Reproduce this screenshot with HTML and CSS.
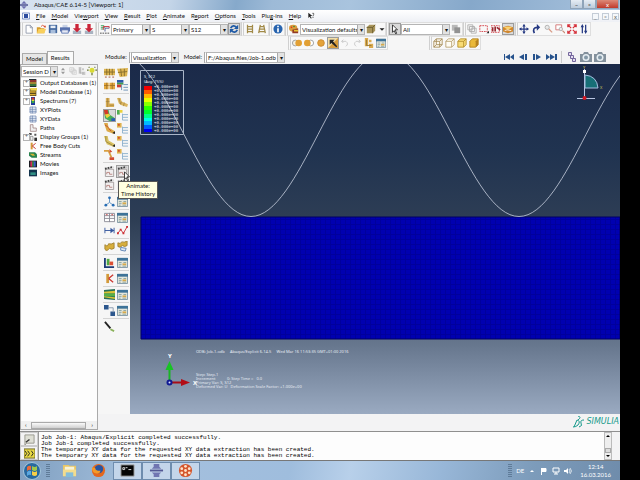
FILE: index.html
```html
<!DOCTYPE html>
<html lang="en">
<head>
<meta charset="utf-8">
<title>Abaqus/CAE 6.14-5 [Viewport: 1]</title>
<link rel="stylesheet" href="styles.css">
</head>
<body>
<svg class="defs" aria-hidden="true">
  <defs>
    <symbol id="app" viewBox="0 0 12 12"><path d="M6 0l4 4H2zM6 12l4-4H2z" fill="#6c70b0"/><path d="M0 5h12v2H0z" fill="#3d4388"/></symbol>
    <symbol id="doc" viewBox="0 0 12 12"><path d="M.5 1.500h11v9H.5z" fill="#fff" stroke="#3d5fae"/><path d="M3 3h6v6H3z" fill="#2d4c9f"/></symbol>
    <symbol id="new" viewBox="0 0 12 12"><path d="M2.500 1.500h5l2.500 2.500v7h-7.500z" fill="#fff" stroke="#8b94a6"/><path d="M7.500 1.500v3h3" fill="none" stroke="#8b94a6"/></symbol>
    <symbol id="open" viewBox="0 0 12 12"><path d="M1 4h4l1 1h4v6H1z" fill="#d59b2c"/><path d="M3 6h9l-2 5H1z" fill="#f8cf5c"/><path d="M6 3q2-3 4 0" fill="none" stroke="#d64426"/><path d="M9 2h3l-1 3z" fill="#d64426"/></symbol>
    <symbol id="save" viewBox="0 0 12 12"><path d="M1 1h10v10H1z" fill="#44699f"/><path d="M3 2h6v3H3z" fill="#e7eef7"/><path d="M3 7h6v4H3z" fill="#a9bedb"/></symbol>
    <symbol id="print" viewBox="0 0 12 12"><path d="M3 1h6v4H3z" fill="#c8d2e6"/><path d="M0 4h12v5H0z" fill="#5670ad"/><path d="M2 7h8v4H2z" fill="#e5e9f4" stroke="#5670ad"/></symbol>
    <symbol id="down" viewBox="0 0 12 12"><path d="M1 8h10v4H1z" fill="#a9b3c1"/><path d="M4 0h4v5h3L6 10 1 5h3z" fill="#cb2438"/></symbol>
    <symbol id="field" viewBox="0 0 12 12"><path d="M1 2h4M1 4h5M1 6h3" stroke="#289c51"/><path d="M4 7V3h7v2" fill="none" stroke="#c92432"/><path d="M6 9V5h5" fill="none" stroke="#394983"/><path d="M0 11h12" stroke="#333" stroke-dasharray="2 1"/></symbol>
    <symbol id="sync" viewBox="0 0 12 12"><path d="M2 5q3-5 7-1M10 7q-3 5-7 1" fill="none" stroke="#1f5aa6" stroke-width="2"/><path d="M11 1v5H6zM1 11V6h5z" fill="#1f5aa6"/></symbol>
    <symbol id="ladder" viewBox="0 0 12 12"><path d="M3 1v10M9 1v10M3 3h6M3 6h6M3 9h6" stroke="#a18a48" fill="none" stroke-width="1.500"/></symbol>
    <symbol id="ladder2" viewBox="0 0 12 12"><path d="M4 1L2 11M8 1l2 10M4 3h4M3 6h6M2 9h8" stroke="#a18a48" fill="none" stroke-width="1.500"/></symbol>
    <symbol id="info" viewBox="0 0 12 12"><circle cx="6" cy="6" r="5.500" fill="#2864af"/><path d="M6 2v2M6 5v5" stroke="#fff" stroke-width="2"/></symbol>
    <symbol id="palette" viewBox="0 0 12 12"><ellipse cx="5" cy="5" rx="5" ry="4" fill="#d99b3c"/><circle cx="3" cy="4" r="1" fill="#d32"/><circle cx="6" cy="3" r="1" fill="#383"/><path d="M4 11V7l7-2v6z" fill="#943b25"/><path d="M6 7h5v2H6z" fill="#e7c435"/></symbol>
    <symbol id="cube" viewBox="0 0 12 12"><path d="M1 4l3-3h7v7l-3 3H1z" fill="#a9955b"/><path d="M1 4h7v7M8 4l3-3" fill="none" stroke="#655728"/></symbol>
    <symbol id="caret" viewBox="0 0 12 12"><path d="M3 5h6L6 8z" fill="#222"/></symbol>
    <symbol id="arrow" viewBox="0 0 12 12"><path d="M3 1v9l2-2 2 4 1-1-2-4h3z" fill="#fff" stroke="#222"/></symbol>
    <symbol id="gray" viewBox="0 0 12 12"><path d="M1 1h7v7H1z" fill="#b9b9b9"/><path d="M4 4h7v7H4z" fill="#929292"/></symbol>
    <symbol id="layers" viewBox="0 0 12 12"><path d="M1 1h6v6H1zM3 3h6v6H3zM5 5h6v6H5z" fill="#f7f7f7" stroke="#aaa"/></symbol>
    <symbol id="redrect" viewBox="0 0 12 12"><path d="M1 2h9v7H1z" fill="none" stroke="#d3343b" stroke-dasharray="2 1"/><path d="M9 11l3-3v3z" fill="#222"/></symbol>
    <symbol id="redpick" viewBox="0 0 12 12"><path d="M0 2h10v8H0z" fill="none" stroke="#d3343b" stroke-dasharray="2 1"/><path d="M2 4v5M5 3v6M7 4l4 3" stroke="#9a2931" stroke-width="2"/></symbol>
    <symbol id="disk" viewBox="0 0 12 12"><path d="M0 4l6-2 6 2v5l-6 2-6-2z" fill="#d0872d"/><path d="M1 4l5-1 5 1-5 3z" fill="#fbd26c"/><path d="M2 8l3-1 5 1" stroke="#fff" fill="none"/></symbol>
    <symbol id="pan" viewBox="0 0 12 12"><path d="M6 1v10M1 6h10" stroke="#263a83" stroke-width="1.500"/><path d="M6 0l2 3H4zM6 12l2-3H4zM0 6l3-2v4zM12 6L9 4v4z" fill="#263a83"/></symbol>
    <symbol id="rotate" viewBox="0 0 12 12"><path d="M4 11Q1 4 8 4" fill="none" stroke="#263a83" stroke-width="2"/><path d="M7 0l4 4-4 4z" fill="#263a83"/></symbol>
    <symbol id="mag" viewBox="0 0 12 12"><circle cx="5" cy="4" r="2.500" fill="#e9e9e9" stroke="#aaa"/><path d="M7 6l4 4" stroke="#d89b86" stroke-width="1.500"/></symbol>
    <symbol id="zoombox" viewBox="0 0 12 12"><path d="M1 1h7v6H1z" fill="#fff" stroke="#cf6b6b"/><circle cx="7" cy="6" r="2" fill="#eee" stroke="#aaa"/><path d="M9 8l3 3" stroke="#c98b76" stroke-width="1.500"/></symbol>
    <symbol id="fit" viewBox="0 0 12 12"><path d="M1 4V1h3M8 1h3v3M11 8v3H8M4 11H1V8M1 1l4 4M11 1L7 5M11 11L7 7M1 11l4-4" fill="none" stroke="#d52f39" stroke-width="1.500"/></symbol>
    <symbol id="updown" viewBox="0 0 12 12"><path d="M4 11V2M8 1v9" stroke="#263a83" stroke-width="1.500"/><path d="M4 0l2 4H2zM8 12l2-4H6z" fill="#263a83"/></symbol>
    <symbol id="both" viewBox="0 0 12 12"><circle cx="4" cy="6" r="3.500" fill="#f2eee0" stroke="#949494"/><circle cx="8" cy="6" r="4" fill="#e2a034"/></symbol>
    <symbol id="left" viewBox="0 0 12 12"><circle cx="8" cy="6" r="3.500" fill="#fff" stroke="#949494"/><circle cx="4" cy="6" r="4" fill="#e2a034"/></symbol>
    <symbol id="dot" viewBox="0 0 12 12"><circle cx="6" cy="6" r="4" fill="#e4a33b" stroke="#c8852c"/></symbol>
    <symbol id="swap" viewBox="0 0 12 12"><path d="M0 0h12v12H0z" fill="#d79c3d"/><path d="M0 0h12L0 12z" fill="#f3dfaa"/><path d="M2 2h6L6 4l5 6-1 1-6-5-2 2z" fill="#222"/></symbol>
    <symbol id="undo" viewBox="0 0 12 12"><path d="M4 2L2 4l2 2M2 4h5q4 3 0 6" fill="none" stroke="#c4c4c4"/></symbol>
    <symbol id="redo" viewBox="0 0 12 12"><path d="M8 2l2 2-2 2M10 4H5q-4 3 0 6" fill="none" stroke="#c4c4c4"/></symbol>
    <symbol id="groups" viewBox="0 0 12 12"><path d="M1 0h4v10H1zM6 7h5v5H6zM6 2h3v3H6z" fill="#daaa4d"/><path d="M3 2v7h6" stroke="#907335" fill="none"/></symbol>
    <symbol id="table" viewBox="0 0 12 12"><path d="M.5 1.500h11v10H.5z" fill="#e4e6dc" stroke="#7c95a3"/><path d="M0 1h12v3H0z" fill="#3e7398"/><path d="M2 6h3M2 8h3M7 6h3M2 10h2M6 10h4" stroke="#8aa3a0"/><path d="M6 7h4v2H6z" fill="#d7a94b"/></symbol>
    <symbol id="wire" viewBox="0 0 12 12"><path d="M1 4h7v7H1zM4 1h7v7H4zM1 4l3-3M8 4l3-3M1 11l3-3M8 11l3-3" fill="#fff9e8" fill-opacity=".5" stroke="#a38952"/></symbol>
    <symbol id="hidden" viewBox="0 0 12 12"><path d="M1 4l3-3h7v7l-3 3H1zM1 4h7v7M8 4l3-3" fill="#fffdf5" stroke="#b49b67"/></symbol>
    <symbol id="filled" viewBox="0 0 12 12"><path d="M1 4l3-3h7v7l-3 3H1zM1 4h7v7M8 4l3-3" fill="#f8dc75" stroke="#b28b28"/></symbol>
    <symbol id="shaded" viewBox="0 0 12 12"><path d="M1 4l3-3h7v7l-3 3H1z" fill="#eab93a" stroke="#af8120"/><path d="M8 4l3-3v7l-3 3z" fill="#b68220"/></symbol>
    <symbol id="first" viewBox="0 0 12 12"><path d="M1 3h1v6H1zM7 3v6L2 6zM11 3v6L7 6z" fill="#25518c"/><path d="M1.500 3v6" stroke="#25518c"/></symbol>
    <symbol id="prev" viewBox="0 0 12 12"><path d="M7 3v6L2 6zM8 3h2v6H8z" fill="#25518c"/></symbol>
    <symbol id="next" viewBox="0 0 12 12"><path d="M5 3v6l5-3zM2 3h2v6H2z" fill="#25518c"/></symbol>
    <symbol id="last" viewBox="0 0 12 12"><path d="M1 3v6l4-3zM5 3v6l5-3zM10 3h2v6h-2z" fill="#25518c"/></symbol>
    <symbol id="frames" viewBox="0 0 12 12"><path d="M2.500 1.500h3v3h-3zM4.500 4.500h3v3h-3zM6.500 7.500h3v3h-3z" fill="#e2dcf0" stroke="#74669c"/></symbol>
    <symbol id="camera" viewBox="0 0 12 12"><path d="M0 3h3l1-2h4l1 2h3v8H0z" fill="#83909c"/><circle cx="6" cy="6.500" r="3.500" fill="#e5edf2"/><circle cx="6" cy="6.500" r="2" fill="#8498a7"/></symbol>
    <symbol id="mesh" viewBox="0 0 12 12"><path d="M0 2h12v7H0z" fill="#e0b653"/><path d="M0 5.500h12M3 2v7M6 2v7M9 2v7" stroke="#876f2d"/><path d="M1 11h2M5 11h2M9 11h2" stroke="#a44d2b"/></symbol>
    <symbol id="mesh2" viewBox="0 0 12 12"><path d="M0 2l12-1-1 9-8 1z" fill="#dcb450"/><path d="M1 6l10-1M4 2l1 8M8 2v8" stroke="#876f2d"/></symbol>
    <symbol id="meshpair" viewBox="0 0 12 12"><path d="M0 3h5v7H0zM6 3h6v7H6z" fill="#e3a940"/><path d="M0 6h5M6 6h6M3 3v7M9 3v7" stroke="#a17329"/></symbol>
    <symbol id="rainbow" viewBox="0 0 12 12"><path d="M0 0h7v3H0z" fill="#2957aa"/><path d="M0 3h7v2H0z" fill="#3d9e4e"/><path d="M0 5h5v3H0z" fill="#cd3b2f"/><path d="M7 5h5M7 8h5M7 11h5M5 5v6" stroke="#6a91b4"/></symbol>
    <symbol id="ell" viewBox="0 0 12 12"><path d="M2 1h4v6h5v4H2z" fill="#d9ad54"/><path d="M2 5h4M4 1v10M6 9h5" stroke="#9a7b3a" stroke-width=".7"/></symbol>
    <symbol id="ell2" viewBox="0 0 12 12"><path d="M0 1h4l1 4 7 3-1 3-6-2-3-2z" fill="#dcb65f"/><path d="M2 1l2 7M5 5l-1 3M8 6l-1 4" stroke="#9a7b3a" stroke-width=".7"/></symbol>
    <symbol id="contour" viewBox="0 0 12 12"><path d="M0 0h5l1 5 6 4v3H6L1 9z" fill="#44ad58"/><path d="M0 0h4l1 4-4 2z" fill="#d63a29"/><path d="M1 5l4-1 2 2-4 3z" fill="#ead33b"/><path d="M8 9l4 0v3H8z" fill="#285bb5"/></symbol>
    <symbol id="opts" viewBox="0 0 12 12"><path d="M0 0h5v5H0z" fill="#dfb24f"/><path d="M1 1h2v2H1z" fill="#d0502c"/><path d="M6 4v7M6 5h6M6 8h6M6 11h6" stroke="#8bb0cd"/></symbol>
    <symbol id="optsc" viewBox="0 0 12 12"><path d="M0 0h3v5H0z" fill="#4fae51"/><path d="M3 0h3v3H3z" fill="#ead33b"/><path d="M6 4v7M6 5h6M6 8h6M6 11h6" stroke="#8bb0cd"/></symbol>
    <symbol id="symb" viewBox="0 0 12 12"><path d="M0 0h4l1 5 7 4-1 3-8-3z" fill="#dcaa48"/><path d="M1 2l4 3M5 6l3 3" stroke="#c64a29"/><path d="M9 11l3-2v3z" fill="#222"/></symbol>
    <symbol id="mat" viewBox="0 0 12 12"><path d="M0 0h4l1 5 7 4-1 3-8-3z" fill="#d9c061"/><path d="M2 0v6l7 4" stroke="#9c8a3d" fill="none"/><path d="M9 11l3-2v3z" fill="#222"/></symbol>
    <symbol id="orient" viewBox="0 0 12 12"><path d="M0 2h5l3 7" fill="none" stroke="#d89f42" stroke-width="2"/><path d="M6 0l3 3-3 1M6 9h5v3H6z" fill="#d14c34"/></symbol>
    <symbol id="clap" viewBox="0 0 12 12"><path d="M1.500 3.500h9v8h-9z" fill="#f1efef" stroke="#a39d9d"/><path d="M1 3l9-2" stroke="#444" stroke-width="2" stroke-dasharray="2 1"/><path d="M3 9V7h3v2h3" stroke="#b98480" fill="none"/></symbol>
    <symbol id="axes" viewBox="0 0 12 12"><path d="M6 1v6l-4 3M6 7l4 3" stroke="#5e90c0" fill="none"/><circle cx="6" cy="2" r="1.500" fill="#286db4"/><circle cx="2" cy="10" r="1.500" fill="#286db4"/><circle cx="10" cy="10" r="1.500" fill="#286db4"/></symbol>
    <symbol id="xydata" viewBox="0 0 12 12"><path d="M.5 1.500h11v9H.5zM0 4h12M0 7h12M6 1v10" stroke="#8b8b96" fill="#fff"/><path d="M2 3h2M8 3h2" stroke="#c43a3a"/></symbol>
    <symbol id="span" viewBox="0 0 12 12"><path d="M1 3v6M11 3v6M1 6h10" stroke="#33559d"/><path d="M7 3l4 3-4 3z" fill="#33559d"/></symbol>
    <symbol id="zig" viewBox="0 0 12 12"><path d="M1 9l3-4 3 4 4-7" stroke="#cc2f34" fill="none"/><path d="M0 8h2v2H0zM3 4h2v2H3zM6 8h2v2H6zM10 1h2v2h-2z" fill="#cc2f34"/></symbol>
    <symbol id="flag" viewBox="0 0 12 12"><path d="M1 4q3 3 4-1 3 1 6-1v6q-3 2-5 0-3 4-5 1z" fill="#d7ae3c" stroke="#a18130"/></symbol>
    <symbol id="flag2" viewBox="0 0 12 12"><path d="M1 2q3 2 4-1 3 1 6-1v5q-3 2-5 0-3 3-5 1z" fill="#d7ae3c" stroke="#a18130"/><path d="M4 7l6 1-1 3-5-1z" fill="#dfe8f3" stroke="#5f83b4"/></symbol>
    <symbol id="lbars" viewBox="0 0 12 12"><path d="M1 1v10h10" fill="none" stroke="#1d3c78" stroke-width="2"/><path d="M3 2h3v7H3z" fill="#50a842"/><path d="M6 5h4v4H6z" fill="#db5035"/></symbol>
    <symbol id="forces" viewBox="0 0 12 12"><path d="M4 1v10" stroke="#d29a3b" stroke-width="3"/><path d="M5 6l5-4M5 6l5 4" stroke="#cb3a33" stroke-width="1.500"/></symbol>
    <symbol id="stream" viewBox="0 0 12 12"><path d="M0 1l12-1v12L0 11z" fill="#286f57"/><path d="M0 3l12-1v3L0 5z" fill="#d9c338"/><path d="M0 5h12v3H0z" fill="#55b049"/><path d="M0 8l12 1v2L0 9z" fill="#d9c338"/></symbol>
    <symbol id="link" viewBox="0 0 12 12"><path d="M0 0h5v5H0zM7 7h5v5H7z" fill="#2b568d"/><path d="M5 3h5v5" stroke="#8a9aad" fill="none"/></symbol>
    <symbol id="dgroup" viewBox="0 0 12 12"><path d="M0 0h4v3H0zM8 1h3v3H8z" fill="#555"/><path d="M2 5h4v6H2z" fill="#eee" stroke="#777"/><path d="M8 7h4v5H8z" fill="#333"/></symbol>
    <symbol id="brush" viewBox="0 0 12 12"><path d="M1 1l6 7" stroke="#222" stroke-width="2"/><path d="M7 9l4 2" stroke="#8bb25b" stroke-width="2"/></symbol>
    <symbol id="db" viewBox="0 0 12 12"><path d="M0 0h11v12H0z" fill="#222c33"/><path d="M1 2h10v2H1z" fill="#c53c2d"/><path d="M1 5h10v2H1z" fill="#e2b433"/><path d="M1 8h10v2H1z" fill="#4a9a3c"/></symbol>
    <symbol id="mdb" viewBox="0 0 12 12"><path d="M0 1h11v11H0z" fill="#5b4a1c"/><path d="M2 0h10v4H2z" fill="#ecd04f"/><path d="M1 5h9v2H1zM1 9h9v2H1z" fill="#d9ad34"/></symbol>
    <symbol id="movie" viewBox="0 0 12 12"><path d="M0 1h12v10H0z" fill="#1b1b22"/><path d="M2 2h3v8H2z" fill="#d32f5a"/><path d="M5 2h2v8H5z" fill="#3bab3e"/><path d="M7 2h3v8H7z" fill="#3559c9"/></symbol>
    <symbol id="image" viewBox="0 0 12 12"><path d="M0 1h12v10H0z" fill="#13344d"/><path d="M2 5h8v4H2z" fill="#2f8f83"/></symbol>
    <symbol id="streams" viewBox="0 0 12 12"><path d="M0 2h9l3 3v5H4L0 7z" fill="#27824f"/><path d="M1 4h6l2 3H5z" fill="#d5b737"/></symbol>
    <symbol id="spec" viewBox="0 0 12 12"><path d="M3 0h6v12H3z" fill="#233e9b"/><path d="M4 1h4v3H4z" fill="#db3628"/><path d="M4 4h4v2H4z" fill="#e8d930"/><path d="M4 6h4v3H4z" fill="#37ab48"/></symbol>
    <symbol id="grid" viewBox="0 0 12 12"><path d="M1.500 1.500h9v9h-9zM1 5h10M1 8h10M5 1v10" fill="#e8eef8" stroke="#647da9"/></symbol>
    <symbol id="path" viewBox="0 0 12 12"><path d="M2 1h4v5h5v5H2z" fill="#eee" stroke="#927171"/></symbol>
    <symbol id="bulb" viewBox="0 0 12 12"><circle cx="6" cy="5" r="3" fill="#d9db34"/><path d="M6 8v3M0 5h2M10 5h2M2 1l1 1M10 1L9 2" stroke="#68762d" stroke-width="1.500"/></symbol>
    <symbol id="spin" viewBox="0 0 12 12"><path d="M3 5l3-4 3 4zM3 7l3 4 3-4z" fill="#9a9a9a"/></symbol>
    <symbol id="hint" viewBox="0 0 12 12"><path d="M2 1v8l2-2 2 3 1-1-2-3h3z" fill="#222"/><path d="M8 2h2v2L9 6M9 7v2" stroke="#222" fill="none"/></symbol>
    <symbol id="prompt" viewBox="0 0 12 12"><path d="M1 1h10v9H3l-2 2z" fill="#dedfd5" stroke="#96968c"/><path d="M2 9l4-3" stroke="#333" stroke-width="1.500"/></symbol>
    <symbol id="cli" viewBox="0 0 12 12"><path d="M0 1h12v10H0z" fill="#e7d843" stroke="#6a6428"/><path d="M1 3l2 3-2 3M4 3l2 3-2 3M8 3l2 3-2 3" stroke="#222" fill="none"/></symbol>
    <linearGradient id="sky" x1="0" y1="0" x2="0" y2="1"><stop offset="0" stop-color="#1b2a49"/><stop offset=".25" stop-color="#203350"/><stop offset=".45" stop-color="#2e3e55"/><stop offset=".8" stop-color="#66768d"/><stop offset="1" stop-color="#9aaac1"/></linearGradient>
    <pattern id="cells" width="5" height="5" patternUnits="userSpaceOnUse"><path d="M0 0h5v5H0z" fill="#0000b0"/><path d="M0 .5h5M.5 0v5" stroke="#00009c"/></pattern>
  </defs>
</svg>

<main class="window">
  <header class="title">
    <svg class="i8"><use href="#app"/></svg><h1>Abaqus/CAE 6.14-5 [Viewport: 1]</h1>
    <div class="winbtns"><button aria-label="Minimize">–</button><button aria-label="Restore">▫</button><button class="close" aria-label="Close">x</button></div>
  </header>

  <nav class="menu">
    <svg class="i8"><use href="#doc"/></svg>
    <a href="#"><u>F</u>ile</a><a href="#"><u>M</u>odel</a><a href="#">Vie<u>w</u>port</a><a href="#"><u>V</u>iew</a><a href="#"><u>R</u>esult</a><a href="#"><u>P</u>lot</a><a href="#"><u>A</u>nimate</a><a href="#">R<u>e</u>port</a><a href="#"><u>O</u>ptions</a><a href="#"><u>T</u>ools</a><a href="#">Plu<u>g</u>-ins</a><a href="#"><u>H</u>elp</a>
    <svg class="i8"><use href="#hint"/></svg>
    <div class="mdi"><button aria-label="Minimize viewport">_</button><button aria-label="Restore viewport">▫</button><button aria-label="Close viewport">x</button></div>
  </nav>

  <div class="bars">
    <div class="bar">
      <div class="set">
        <button aria-label="New"><svg><use href="#new"/></svg></button><button aria-label="Open"><svg><use href="#open"/></svg></button><button aria-label="Save"><svg><use href="#save"/></svg></button><button aria-label="Print"><svg><use href="#print"/></svg></button><button aria-label="Import"><svg><use href="#down"/></svg></button><button aria-label="Export"><svg><use href="#down"/></svg></button>
      </div>
      <div class="set">
        <button aria-label="Field output"><svg><use href="#field"/></svg></button>
        <span class="combo w-m"><select aria-label="Variable type"><option>Primary</option></select></span><span class="combo w-m"><select aria-label="Variable"><option>S</option></select></span><span class="combo w-m"><select aria-label="Component"><option>S12</option></select></span>
        <button class="on" aria-label="Sync"><svg><use href="#sync"/></svg></button>
      </div>
      <div class="set">
        <button aria-label="Perspective off"><svg><use href="#ladder"/></svg></button><button aria-label="Perspective on"><svg><use href="#ladder2"/></svg></button>
      </div>
      <div class="set"><button aria-label="Query"><svg><use href="#info"/></svg></button></div>
      <div class="set">
        <button aria-label="Color code"><svg><use href="#palette"/></svg></button>
        <span class="combo w-l"><select aria-label="Color mapping"><option>Visualization defaults</option></select></span>
        <button aria-label="Translucency"><svg><use href="#cube"/></svg></button><button class="slim" aria-label="Translucency menu"><svg><use href="#caret"/></svg></button>
      </div>
      <div class="set">
        <button class="on" aria-label="Select"><svg><use href="#arrow"/></svg></button>
        <span class="combo w-s"><select aria-label="Selection filter"><option>All</option></select></span>
        <button aria-label="Highlight"><svg><use href="#gray"/></svg></button>
      </div>
      <div class="set">
        <button aria-label="Layers"><svg><use href="#layers"/></svg></button><button aria-label="Drag shape"><svg><use href="#redrect"/></svg></button><button aria-label="Drag scope"><svg><use href="#redpick"/></svg></button><button class="on" aria-label="Closest"><svg><use href="#disk"/></svg></button>
      </div>
      <div class="set">
        <button aria-label="Pan"><svg><use href="#pan"/></svg></button><button aria-label="Rotate"><svg><use href="#rotate"/></svg></button><button aria-label="Magnify"><svg><use href="#mag"/></svg></button><button aria-label="Box zoom"><svg><use href="#zoombox"/></svg></button><button aria-label="Fit"><svg><use href="#fit"/></svg></button><button aria-label="Cycle views"><svg><use href="#updown"/></svg></button>
      </div>
    </div>
    <div class="bar second">
      <div class="set">
        <button aria-label="Replace"><svg><use href="#both"/></svg></button><button aria-label="Remove"><svg><use href="#left"/></svg></button><button aria-label="All"><svg><use href="#dot"/></svg></button><button class="on" aria-label="Pick"><svg><use href="#swap"/></svg></button><button aria-label="Undo"><svg><use href="#undo"/></svg></button><button aria-label="Redo"><svg><use href="#redo"/></svg></button><button aria-label="Groups"><svg><use href="#groups"/></svg></button><button aria-label="Group manager"><svg><use href="#table"/></svg></button>
      </div>
      <div class="set">
        <button aria-label="Wireframe"><svg><use href="#wire"/></svg></button><button aria-label="Hidden"><svg><use href="#hidden"/></svg></button><button aria-label="Filled"><svg><use href="#filled"/></svg></button><button aria-label="Shaded"><svg><use href="#shaded"/></svg></button>
      </div>
    </div>
  </div>

  <div class="work">
    <aside class="side">
      <div class="tabs" role="tablist"><button role="tab">Model</button><button role="tab" class="cur">Results</button></div>
      <div class="treebox">
        <div class="filter">
          <span class="combo"><select aria-label="Tree contents"><option>Session D</option></select></span>
          <svg class="i8"><use href="#spin"/></svg><svg class="i8 dim"><use href="#layers"/></svg><svg class="i8 dim"><use href="#groups"/></svg><svg class="i10"><use href="#bulb"/></svg>
        </div>
        <ul class="tree">
          <li class="more"><svg class="i8"><use href="#db"/></svg>Output Databases (1)</li>
          <li class="more"><svg class="i8"><use href="#mdb"/></svg>Model Database (1)</li>
          <li class="more"><svg class="i8"><use href="#spec"/></svg>Spectrums (7)</li>
          <li><svg class="i8"><use href="#grid"/></svg>XYPlots</li>
          <li><svg class="i8"><use href="#grid"/></svg>XYData</li>
          <li><svg class="i8"><use href="#path"/></svg>Paths</li>
          <li class="more"><svg class="i8"><use href="#dgroup"/></svg>Display Groups (1)</li>
          <li><svg class="i8"><use href="#forces"/></svg>Free Body Cuts</li>
          <li><svg class="i8"><use href="#streams"/></svg>Streams</li>
          <li><svg class="i8"><use href="#movie"/></svg>Movies</li>
          <li><svg class="i8"><use href="#image"/></svg>Images</li>
        </ul>
        <div class="hscroll"><span>‹</span><i></i><span>›</span></div>
      </div>
    </aside>

    <section class="right">
      <div class="context">
        <label for="module">Module:</label><span class="combo grip w-mod"><select id="module"><option>Visualization</option></select></span>
        <label for="model">Model:</label><span class="combo grip w-odb"><select id="model"><option>F:/Abaqus.files/Job-1.odb</option></select></span>
        <div class="player">
          <button aria-label="First"><svg><use href="#first"/></svg></button><button aria-label="Previous"><svg><use href="#prev"/></svg></button><button aria-label="Next"><svg><use href="#next"/></svg></button><button aria-label="Last"><svg><use href="#last"/></svg></button>
          <hr>
          <button aria-label="Frame selector"><svg><use href="#frames"/></svg></button><button aria-label="Snapshot"><svg><use href="#camera"/></svg></button><button aria-label="Movie"><svg><use href="#camera"/></svg></button>
        </div>
      </div>
      <div class="stage">
        <div class="tools">
          <div><button aria-label="Undeformed"><svg><use href="#mesh"/></svg></button><button aria-label="Deformed"><svg><use href="#mesh2"/></svg></button><button aria-label="Superimpose"><svg><use href="#meshpair"/></svg></button><button aria-label="Common options"><svg><use href="#rainbow"/></svg></button></div>
          <div><button aria-label="Plot undeformed"><svg><use href="#ell"/></svg></button><button aria-label="Plot deformed"><svg><use href="#ell2"/></svg></button><button class="on" aria-label="Contours"><svg><use href="#contour"/></svg></button><button aria-label="Contour options"><svg><use href="#optsc"/></svg></button><button aria-label="Symbols"><svg><use href="#symb"/></svg></button><button aria-label="Symbol options"><svg><use href="#opts"/></svg></button><button aria-label="Materials"><svg><use href="#mat"/></svg></button><button aria-label="Material options"><svg><use href="#opts"/></svg></button><button aria-label="Orientations"><svg><use href="#orient"/></svg></button><button aria-label="Orientation options"><svg><use href="#opts"/></svg></button></div>
          <div><button aria-label="Scale factor"><svg><use href="#clap"/></svg></button><button class="on" aria-label="Time history"><svg><use href="#clap"/></svg></button><button aria-label="Harmonic"><svg><use href="#clap"/></svg></button><button aria-label="Animation options"><svg><use href="#clap"/></svg></button></div>
          <div><button aria-label="Coordinate system"><svg><use href="#axes"/></svg></button><button aria-label="Coordinate manager"><svg><use href="#table"/></svg></button></div>
          <div><button aria-label="XY data"><svg><use href="#xydata"/></svg></button><button aria-label="XY manager"><svg><use href="#table"/></svg></button><button aria-label="Axis options"><svg><use href="#span"/></svg></button><button aria-label="Curve options"><svg><use href="#zig"/></svg></button></div>
          <div><button aria-label="View cut"><svg><use href="#flag"/></svg></button><button aria-label="Overlay"><svg><use href="#flag2"/></svg></button></div>
          <div><button aria-label="Ply stack"><svg><use href="#lbars"/></svg></button><button aria-label="Ply manager"><svg><use href="#table"/></svg></button></div>
          <div><button aria-label="Free body"><svg><use href="#forces"/></svg></button><button aria-label="Free body manager"><svg><use href="#table"/></svg></button></div>
          <div><button aria-label="Stream"><svg><use href="#stream"/></svg></button><button aria-label="Stream manager"><svg><use href="#table"/></svg></button></div>
          <div><button aria-label="Links"><svg><use href="#link"/></svg></button><button aria-label="Link manager"><svg><use href="#table"/></svg></button></div>
          <div><button aria-label="Probe"><svg><use href="#brush"/></svg></button></div>
          <svg class="pointer"><use href="#arrow"/></svg>
          <p class="tip" role="tooltip">Animate:<br>Time History</p>
        </div>
        <svg class="view" viewBox="0 0 490 350" preserveAspectRatio="xMinYMin slice">
          <path d="M0 0h490v350H0z" fill="url(#sky)"/>
          <path d="M11 153h479v122H11z" fill="url(#cells)" stroke="#000064"/>
          <path d="M-13-11.500C36-11.500 72 152.500 121 152.500S206-11.500 255-11.500 340 152.500 389 152.500 474-11.500 523-11.500" fill="none" stroke="#c9d1df" stroke-width=".8"/>
          <g class="legend">
            <path d="M10.500 6.500h43v64h-43z" fill="none" stroke="#aab6c8"/>
            <text x="14" y="14">S, S12</text><text x="14" y="19">(Avg: 75%)</text>
            <path d="M14 22h8v4h-8z" fill="#f00000"/><path d="M14 26h8v4h-8z" fill="#ff5c00"/><path d="M14 30h8v4h-8z" fill="#ffb900"/><path d="M14 34h8v4h-8z" fill="#e8ff00"/><path d="M14 38h8v4h-8z" fill="#8bff00"/><path d="M14 42h8v4h-8z" fill="#2eff00"/><path d="M14 46h8v4h-8z" fill="#00ff2e"/><path d="M14 50h8v4h-8z" fill="#00ff8b"/><path d="M14 54h8v3h-8z" fill="#00ffe8"/><path d="M14 57h8v4h-8z" fill="#00b9ff"/><path d="M14 61h8v4h-8z" fill="#005cff"/><path d="M14 65h8v3h-8z" fill="#0000f0"/>
            <g class="mono"><text x="24" y="24">+0.000e+00</text><text x="24" y="28">+0.000e+00</text><text x="24" y="32">+0.000e+00</text><text x="24" y="36">+0.000e+00</text><text x="24" y="40">+0.000e+00</text><text x="24" y="44">+0.000e+00</text><text x="24" y="48">+0.000e+00</text><text x="24" y="52">+0.000e+00</text><text x="24" y="56">+0.000e+00</text><text x="24" y="60">+0.000e+00</text><text x="24" y="64">+0.000e+00</text><text x="24" y="68">+0.000e+00</text></g>
          </g>
          <g>
            <path d="M454.500 5v29M447 34.500h18" stroke="#b8c6e2" fill="none"/>
            <path d="M455 11q12 1 13 13h-13z" fill="#176f77" stroke="#a9bfe2"/>
            <circle cx="454.500" cy="34" r="2" fill="#d31822"/><path d="M453 6h3v3h-3z" fill="#fff"/>
            <text x="453" y="5" class="gold">Y</text><text x="470" y="25" class="gold">X</text>
          </g>
          <g>
            <path d="M39.500 317v-13" stroke="#18b524" stroke-width="2"/><path d="M39.500 297l4 9h-8z" fill="#18c324"/>
            <path d="M41 318.500h13" stroke="#a80d16" stroke-width="2"/><path d="M51 315l9 3.500-9 3.500z" fill="#b30d16"/>
            <circle cx="39.500" cy="318.500" r="3" fill="#101a93"/><circle cx="39.500" cy="318.500" r="1" fill="#d8deff"/>
            <text x="38" y="294" class="axis">Y</text><text x="63" y="321" class="axis">X</text>
          </g>
          <g>
            <text x="66" y="289" xml:space="preserve">ODB: Job-1.odb     Abaqus/Explicit 6.14-5     Wed Mar 16 11:53:35 GMT+01:00 2016</text>
            <text x="66" y="312">Step: Step-1</text><text x="66" y="316" xml:space="preserve">Increment           0: Step Time =   0.0</text><text x="66" y="320">Primary Var: S, S12</text><text x="66" y="324" xml:space="preserve">Deformed Var: U   Deformation Scale Factor: +1.000e+00</text>
          </g>
        </svg>
      </div>
      <div class="brand"><svg viewBox="0 0 12 12"><path d="M5 0q4 1 0 4M1 11l3-7q4 1 1 5-2 2-5 2M11 4q-4 0-3 3 2 3-2 4" fill="none" stroke="#159a8b"/></svg><em>SIMULIA</em></div>
    </section>
  </div>

  <section class="messages">
    <div class="msgbtns"><button aria-label="Messages"><svg><use href="#prompt"/></svg></button><button aria-label="Command line"><svg><use href="#cli"/></svg></button></div>
    <div class="log"><p>Job Job-1: Abaqus/Explicit completed successfully.</p><p>Job Job-1 completed successfully.</p><p>The temporary XY data for the requested XY data extraction has been created.</p><p>The temporary XY data for the requested XY data extraction has been created.</p></div>
    <div class="vscroll"><svg viewBox="0 0 6 6"><path d="M1 4h4L3 2z"/></svg><i></i><svg viewBox="0 0 6 6"><path d="M1 2h4L3 4z"/></svg></div>
  </section>

  <footer class="taskbar">
    <button class="start" aria-label="Start"><svg viewBox="0 0 18 18"><circle cx="9" cy="9" r="8.500" fill="#28699f" stroke="#a6c7dc"/><path d="M4 5q2-2 4-1v4q-2-1-4 1z" fill="#ec6a38"/><path d="M9 4q3 2 5 0v4q-2 2-5 0z" fill="#a1c84b"/><path d="M4 10q2-2 4-1v4q-2-1-4 1z" fill="#5aa8e0"/><path d="M9 9q3 2 5 0v4q-2 2-5 0z" fill="#f8cf47"/></svg></button>
    <span class="dots"></span>
    <button aria-label="Explorer"><svg viewBox="0 0 16 16"><path d="M1 2h6l1 1h7v11H1z" fill="#e9c767"/><path d="M3 4h10v6H3z" fill="#f8f3d7"/><path d="M1 7h14v7H1z" fill="#f3dc8d"/><path d="M4 10h8v5H4z" fill="#84bddb"/></svg></button>
    <button aria-label="Firefox"><svg viewBox="0 0 16 16"><circle cx="8" cy="8" r="7" fill="#e4671e"/><circle cx="8.500" cy="6.500" r="4.500" fill="#2a55a0"/><path d="M1 5q4-1 4 2 2 2 5 1 0 4-5 3-4-1-4-6" fill="#f49a28"/></svg></button>
    <button class="run" aria-label="Command prompt"><svg viewBox="0 0 16 16"><path d="M1 2h14v12H1z" fill="#050505" stroke="#aaa"/><path d="M3 5h2v2H3zM6 5h2M9 7h3" stroke="#ddd" fill="none"/></svg></button>
    <button class="run" aria-label="Abaqus"><svg viewBox="0 0 16 16"><path d="M5 1h6v3l2 2H3l2-2zM5 15h6v-3l2-2H3l2 2z" fill="#7075b1"/><path d="M1 7h14v2H1z" fill="#535894"/></svg></button>
    <button class="run" aria-label="Recorder"><svg viewBox="0 0 16 16"><circle cx="8" cy="8" r="7" fill="#d4552c"/><circle cx="8" cy="8" r="1.500" fill="#ffe3c8"/><g fill="#ffe3c8"><circle cx="8" cy="3.500" r="1.500"/><circle cx="8" cy="12.500" r="1.500"/><circle cx="4" cy="6" r="1.500"/><circle cx="12" cy="6" r="1.500"/><circle cx="4" cy="10.500" r="1.500"/><circle cx="12" cy="10.500" r="1.500"/></g></svg></button>
    <div class="tray">
      <span class="dots"></span><span>DE</span>
      <svg viewBox="0 0 8 8"><path d="M2 5h4L4 3z" fill="#fff"/></svg>
      <svg viewBox="0 0 8 8"><path d="M1.500 1v7M2 1.500h4v3H2" stroke="#fff" fill="#fff"/></svg>
      <svg viewBox="0 0 8 8"><path d="M1 1h6v4H1zM4 5v2M2 7h4" stroke="#fff" fill="none"/></svg>
      <svg viewBox="0 0 8 8"><path d="M0 3h2l2-2v6L2 5H0z" fill="#fff"/><path d="M5 2q2 2 0 4M6 1q3 3 0 6" stroke="#fff" fill="none" stroke-width=".7"/></svg>
      <time>12:14<br>16.03.2016</time>
    </div>
  </footer>
</main>
</body>
</html>
```

FILE: styles.css
```css
* { box-sizing: border-box; }
body { margin: 0; padding: 0 20px; background: #000; font: 6px/8px Lato, "Open Sans", sans-serif; color: #111; }
h1, p, ul { margin: 0; padding: 0; font: inherit; }
button, select { font: inherit; color: inherit; margin: 0; padding: 0; border: 0; background: none; border-radius: 0; }
svg { display: block; flex: none; }
.defs { position: absolute; width: 0; height: 0; }
.i8 { width: 8px; height: 8px; }
.i10 { width: 10px; height: 10px; }
.dim { opacity: .6; filter: grayscale(1); }

.window { min-height: 100vh; display: flex; flex-direction: column; background: #f3f3f4; }

.title { display: flex; align-items: center; gap: 6px; height: 10px; background: linear-gradient(100deg, #d7e3f0 0, #c4d5e8 25%, #86a9cb 36%, #9dbad7 42%, #a9c4de 55%, #86a8ca 75%, #a9c3de); }
.winbtns { margin-left: auto; display: flex; height: 9px; align-self: flex-start; padding-right: 1px; }
.winbtns button { width: 13px; border: 1px solid #8fa4b9; border-top: 0; background: linear-gradient(#e6edf4, #bccbdb); line-height: 7px; }
.winbtns .close { width: 23px; background: linear-gradient(#dc8a78, #c0392b); color: #fff; }

.menu { display: flex; align-items: center; gap: 6px; height: 12px; padding-left: 2px; background: linear-gradient(#fff, #eef0f5); }
.menu a { color: inherit; text-decoration: none; }
.menu u { text-underline-offset: 1px; }
.mdi { margin-left: auto; display: flex; gap: 3px; padding-right: 1px; }
.mdi button { width: 7px; height: 7px; border: 1px solid #c4ccd6; background: #f5f8fb; line-height: 5px; color: #666; }

.bars { background: #f6f6f6; }
.bar { display: flex; height: 14px; }
.second { padding-left: 268px; gap: 41px; }
.set { display: flex; align-items: center; border: 1px solid #dedede; border-left: 3px double #d0d0d0; background: #f8f8f8; }
.set button { width: 12px; height: 12px; display: grid; place-items: center; }
.set .slim { width: 8px; }
.set button svg { width: 10px; height: 10px; }
.set .on, .tools .on { background: #dadada; outline: 1px solid #9c9c9c; outline-offset: -1px; }

.combo { position: relative; display: block; height: 11px; border: 1px solid #b5b5b5; background: #fff; }
.combo select { appearance: none; width: 100%; height: 9px; padding: 0 6px 0 1px; line-height: 9px; display: block; overflow: hidden; }
.combo::after { content: "▾"; position: absolute; right: 0; top: 0; width: 6px; height: 9px; line-height: 9px; text-align: center; background: #e2e2e2; border-left: 1px solid #aaa; pointer-events: none; }
.w-s { width: 49px; }
.w-m { width: 39px; }
.w-l { width: 65px; }
.w-mod { width: 50px; }
.w-odb { width: 81px; }
.grip { border-left: 3px double #aaa; }

.work { flex: 1; display: flex; }
.side { width: 78px; display: flex; flex-direction: column; padding-top: 1px; }
.tabs { display: flex; align-items: flex-end; padding-left: 2px; }
.tabs button { height: 11px; padding: 0 3px; border: 1px solid #aaa; border-bottom: 0; background: #e6e6e6; }
.tabs .cur { height: 13px; background: #fafafa; }
.treebox { flex: 1; display: flex; flex-direction: column; border: 1px solid #aaa; background: #fdfdfd; }
.filter { display: flex; align-items: center; justify-content: space-between; height: 13px; border-bottom: 1px solid #e4e4e4; background: #f4f4f4; }
.filter .combo { width: 37px; }
.tree { list-style: none; }
.tree li { display: flex; align-items: center; gap: 3px; height: 9px; padding-left: 8px; white-space: nowrap; position: relative; }
.tree .more::before { content: "+"; position: absolute; left: 2px; top: 2px; width: 5px; height: 5px; border: 1px solid #b4b4b4; line-height: 3px; font-size: 5px; text-align: center; color: #555; }
.hscroll { margin-top: auto; display: flex; align-items: center; justify-content: space-between; height: 8px; padding: 0 4px; background: #f0f0f0; line-height: 6px; }
.hscroll i { width: 55px; height: 7px; border: 1px solid #aaa; background: linear-gradient(#fafafa, #d0d0d0); }

.right { flex: 1; min-width: 0; display: flex; flex-direction: column; }
.context { display: flex; align-items: center; gap: 2px; height: 14px; padding-left: 7px; }
.context .combo + label { margin-left: 3px; }
.player { margin-left: auto; display: flex; align-items: center; gap: 2px; padding-right: 14px; }
.player button, .player svg { width: 12px; height: 12px; }
.player hr { width: 1px; height: 12px; border: 0; margin: 0 2px; background: #ccc; }
.stage { flex: 1; display: flex; min-height: 0; }
.tools { position: relative; width: 32px; padding: 0 1px 0 5px; background: #f6f6f6; }
.tools div { display: grid; grid-template-columns: 13px 13px; grid-auto-rows: 13px; padding: 2px 0 1px; border-bottom: 1px solid #d4d4d4; }
.tools div:nth-of-type(n+5) { padding: 1px 0; }
.tools div:last-of-type { border-bottom: 0; }
.tools button { display: grid; place-items: center; }
.tools button svg { width: 11px; height: 11px; }
.tools .pointer { position: absolute; left: 24px; top: 107px; width: 10px; height: 10px; }
.tip { position: absolute; z-index: 2; left: 20px; top: 117px; padding: 0 2px; border: 1px solid #555; background: #ffffe1; text-align: center; white-space: nowrap; }
.view { flex: 1; min-width: 0; width: 0; height: 350px; font: 4px "Noto Sans", sans-serif; }
.view text { fill: #e6ebf3; }
.view .mono { font-family: "DejaVu Sans Mono", monospace; }
.view .axis { font-weight: bold; font-size: 6px; fill: #fff; }
.view .gold { fill: #d8c860; }
.brand { display: flex; align-items: center; justify-content: flex-end; gap: 2px; height: 16px; padding-right: 1px; color: #159a8b; font: 8px/10px "DejaVu Sans", sans-serif; }
.brand svg { width: 12px; height: 12px; }

.messages { display: flex; height: 30px; border-top: 1px solid #8f8f8f; border-bottom: 1px solid #777; margin-top: 1px; }
.msgbtns { width: 18px; display: flex; flex-direction: column; }
.msgbtns button { flex: 1; display: grid; place-items: center; border: 1px solid #ccc; }
.msgbtns svg { width: 11px; height: 11px; }
.log { flex: 1; background: #fdfdfd; border-left: 1px solid #999; padding: 3px 2px; font: 6px/6px "Liberation Mono", monospace; color: #000; }
.vscroll { width: 8px; margin-right: 8px; display: flex; flex-direction: column; align-items: center; border: 1px solid #bbb; background: #eee; }
.vscroll svg { width: 6px; height: 6px; }
.vscroll i { margin-top: auto; width: 6px; height: 5px; border: 1px solid #aaa; background: #ddd; }

.taskbar { display: flex; align-items: center; height: 19px; padding-left: 3px; background: linear-gradient(100deg, #7f9fc0, #a5c0dd 20%, #9fbddd 45%, #b8d0ea 55%, #98b7d8 70%, #7d9cbb 85%, #6f8cab); }
.taskbar button { width: 29px; height: 18px; display: grid; place-items: center; }
.taskbar button svg { width: 15px; height: 15px; }
.taskbar .start { width: 18px; }
.taskbar .start svg { width: 18px; height: 18px; }
.taskbar .run { border: 1px solid #6e8cae; background: #c3d5ea; }
.dots { width: 4px; height: 14px; margin: 0 5px; background: repeating-linear-gradient(#5f7b98 0 1px, transparent 1px 2px); }
.tray { margin-left: auto; display: flex; align-items: center; gap: 4px; padding-right: 9px; color: #fff; }
.tray svg { width: 8px; height: 8px; }
.tray .dots { margin: 0; }
.tray time { text-align: center; margin-left: 4px; }
```
